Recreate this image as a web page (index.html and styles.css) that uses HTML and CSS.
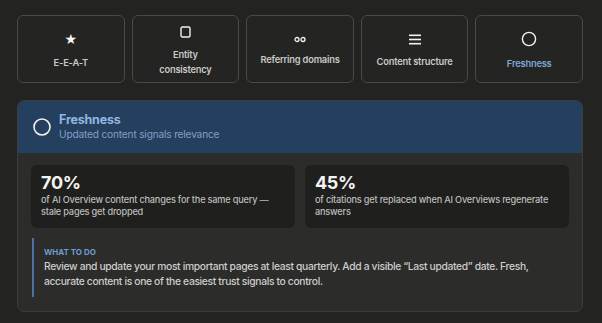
FILE: index.html
```html
<!DOCTYPE html>
<html lang="en">
<head>
<meta charset="utf-8">
<link rel="stylesheet" href="styles.css">
</head>
<body>
<div class="page">
  <div class="tabs">
    <div class="tab">
      <span class="tab-icon star">★</span>
      <span class="tab-label">E-E-A-T</span>
    </div>
    <div class="tab">
      <span class="tab-icon">
        <svg width="11" height="12" viewBox="0 0 11 12"><rect x="1" y="1" width="9" height="10" rx="1.5" fill="none" stroke="#f2f2f2" stroke-width="1.4"/></svg>
      </span>
      <span class="tab-label">Entity<br>consistency</span>
    </div>
    <div class="tab">
      <span class="tab-icon">
        <svg width="12" height="7" viewBox="0 0 12 7"><circle cx="3" cy="3.5" r="2" fill="none" stroke="#f2f2f2" stroke-width="1.3"/><circle cx="9" cy="3.5" r="2" fill="none" stroke="#f2f2f2" stroke-width="1.3"/></svg>
      </span>
      <span class="tab-label">Referring domains</span>
    </div>
    <div class="tab">
      <span class="tab-icon">
        <svg width="12" height="11" viewBox="0 0 12 11"><rect x="0" y="0.5" width="12" height="1.6" fill="#f2f2f2"/><rect x="0" y="4.7" width="12" height="1.6" fill="#f2f2f2"/><rect x="0" y="8.9" width="12" height="1.6" fill="#f2f2f2"/></svg>
      </span>
      <span class="tab-label">Content structure</span>
    </div>
    <div class="tab active">
      <span class="tab-icon">
        <svg width="16" height="16" viewBox="0 0 16 16"><circle cx="8" cy="8" r="6.6" fill="none" stroke="#f2f2f2" stroke-width="1.4"/></svg>
      </span>
      <span class="tab-label">Freshness</span>
    </div>
  </div>

  <div class="panel">
    <div class="panel-head">
      <svg class="head-icon" width="20" height="20" viewBox="0 0 20 20"><circle cx="10" cy="10" r="8" fill="none" stroke="#f2f2f2" stroke-width="1.6"/></svg>
      <div class="head-text">
        <div class="head-title">Freshness</div>
        <div class="head-sub">Updated content signals relevance</div>
      </div>
    </div>
    <div class="panel-body">
      <div class="stats">
        <div class="stat">
          <div class="stat-num">70%</div>
          <div class="stat-desc">of AI Overview content changes for the same query — stale pages get dropped</div>
        </div>
        <div class="stat">
          <div class="stat-num">45%</div>
          <div class="stat-desc">of citations get replaced when AI Overviews regenerate answers</div>
        </div>
      </div>
      <div class="callout">
        <div class="callout-label">What to do</div>
        <div class="callout-text">Review and update your most important pages at least quarterly. Add a visible “Last updated” date. Fresh, accurate content is one of the easiest trust signals to control.</div>
      </div>
    </div>
  </div>
</div>
</body>
</html>
```

FILE: styles.css
```css
* { box-sizing: border-box; }
html, body {
  margin: 0;
  background: #232321;
  font-family: Inter, "Noto Sans", sans-serif;
  color: #cfcfcd;
}
.page {
  padding: 15px 19px 12px 17px;
}
.tabs {
  display: grid;
  grid-template-columns: repeat(5, 1fr);
  gap: 7px;
}
.tab {
  height: 68px;
  border: 1px solid #494947;
  border-radius: 6px;
  background: #242422;
  display: flex;
  flex-direction: column;
  align-items: center;
  justify-content: center;
  gap: 9px;
  padding-top: 4px;
  text-align: center;
}
.tab-icon {
  display: flex;
  align-items: center;
  justify-content: center;
  color: #f4f4f4;
  line-height: 1;
}
.tab-icon.star {
  font-family: "DejaVu Sans", sans-serif;
  font-size: 14px;
}
.tab-label {
  font-size: 9.3px;
  font-weight: 600;
  color: #c9c9c7;
  line-height: 15px;
  letter-spacing: -0.2px;
}
.tab.active .tab-label {
  color: #7fa6d6;
}
.panel {
  margin-top: 17px;
  border: 1px solid #3d3d3b;
  border-radius: 7px;
  background: #2c2c2a;
  overflow: hidden;
}
.panel-head {
  background: #253f5e;
  height: 52px;
  display: flex;
  align-items: center;
  gap: 7px;
  padding-left: 14px;
}
.head-title {
  font-size: 12.5px;
  font-weight: 700;
  color: #93b6e2;
  line-height: 15px;
  letter-spacing: -0.2px;
  margin-top: -1px;
}
.head-sub {
  font-size: 10.2px;
  color: #7f9fc6;
  line-height: 14px;
  letter-spacing: -0.2px;
}
.panel-body {
  padding: 12px 13px 14px 13px;
}
.stats {
  display: grid;
  grid-template-columns: 1fr 1fr;
  gap: 10px;
}
.stat {
  background: #1f1f1e;
  border-radius: 6px;
  height: 63px;
  padding: 7px 10px;
}
.stat-num {
  font-size: 18px;
  font-weight: 700;
  color: #f4f4f2;
  line-height: 22px;
  letter-spacing: -0.3px;
}
.stat-desc {
  font-size: 9.2px;
  font-weight: 500;
  color: #bdbdbb;
  line-height: 12px;
  letter-spacing: -0.2px;
}
.callout {
  margin-top: 10px;
  border-left: 2px solid #4b72a3;
  padding: 7px 10px 8px 10px;
  margin-left: 1px;
}
.callout-label {
  font-size: 8px;
  font-weight: 700;
  color: #6f9bd1;
  text-transform: uppercase;
  line-height: 14px;
  letter-spacing: 0;
}
.callout-text {
  font-size: 10.3px;
  font-weight: 500;
  color: #cdcdcb;
  line-height: 15px;
  letter-spacing: -0.34px;
}
```
